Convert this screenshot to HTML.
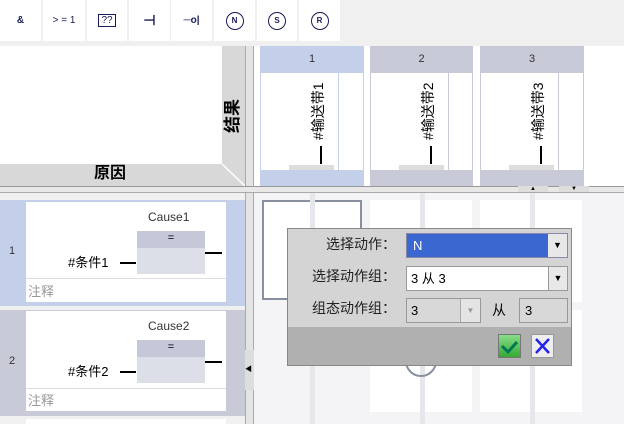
<!DOCTYPE html>
<html><head><meta charset="utf-8"><style>
*{margin:0;padding:0;box-sizing:border-box}
body{width:624px;height:424px;overflow:hidden;background:#f0f0f0;font-family:"Liberation Sans","Noto Sans CJK SC",sans-serif;position:relative}
.a{position:absolute}
.tb{position:absolute;top:0;height:41px;background:#fff;color:#1a1a5a;font-size:10px;font-weight:bold;display:flex;align-items:center;justify-content:center}
.circ{width:18px;height:18px;border:1.5px solid #1a1a5a;border-radius:50%;font-size:8px;display:flex;align-items:center;justify-content:center}
.rt{position:absolute;font-size:14px;color:#000;white-space:nowrap;width:70px;height:16px;line-height:16px;text-align:left;transform:rotate(-90deg);transform-origin:center}
.lbl{position:absolute;font-size:14px;color:#222;text-align:right}
</style></head><body>
<div class="tb" style="left:0;width:41px">&amp;</div>
<div class="tb" style="left:43px;width:42px;font-weight:normal">&gt; = 1</div>
<div class="tb" style="left:87px;width:40px"><span style="border:1.5px solid #1a1a5a;padding:0 2px;font-size:10px;font-weight:normal">??</span></div>
<div class="tb" style="left:129px;width:41px;font-size:14px">⊣</div>
<div class="tb" style="left:171px;width:41px">─o|</div>
<div class="tb" style="left:214px;width:41px"><div class="circ">N</div></div>
<div class="tb" style="left:257px;width:40px"><div class="circ">S</div></div>
<div class="tb" style="left:299px;width:41px"><div class="circ">R</div></div>
<div class="a" style="left:0;top:46px;width:222px;height:118px;background:#fff"></div>
<div class="a" style="left:0;top:164px;width:245px;height:22px;background:#d8d8d8;font-weight:bold;font-size:16px;text-align:center;line-height:20px;padding-right:25px">原因</div>
<div class="a" style="left:222px;top:46px;width:23px;height:140px;background:#d8d8d8"></div>
<svg class="a" style="left:222px;top:164px" width="23" height="22"><polygon points="0,0 23,22 0,22" fill="#d8d8d8"/><line x1="0" y1="0" x2="23" y2="22" stroke="#fff" stroke-width="1.5"/></svg>
<div class="a" style="left:208px;top:106px;width:50px;height:20px;line-height:20px;text-align:center;font-weight:bold;font-size:17px;transform:rotate(-90deg)">结果</div>
<div class="a" style="left:245px;top:46px;width:9px;height:378px;background:#e4e4e4;border-left:1px solid #aaa;border-right:1px solid #aaa"></div>
<div class="a" style="left:0;top:186px;width:624px;height:7px;background:#e8e8e8;border-top:1px solid #999;border-bottom:1px solid #aaa"></div>
<div class="a" style="left:254px;top:46px;width:370px;height:140px;background:#fff"></div>
<div class="a" style="left:260px;top:46px;width:104px;height:140px;background:#c4d0ea"></div>
<div class="a" style="left:370px;top:46px;width:103px;height:140px;background:#c8cad8"></div>
<div class="a" style="left:480px;top:46px;width:104px;height:140px;background:#c8cad8"></div>
<div class="a" style="left:260px;top:46px;width:104px;height:26px;font-size:11px;text-align:center;line-height:26px;color:#333">1</div>
<div class="a" style="left:370px;top:46px;width:103px;height:26px;font-size:11px;text-align:center;line-height:26px;color:#333">2</div>
<div class="a" style="left:480px;top:46px;width:104px;height:26px;font-size:11px;text-align:center;line-height:26px;color:#333">3</div>
<div class="a" style="left:261px;top:73px;width:77px;height:97px;background:#fff"></div><div class="a" style="left:339px;top:73px;width:24px;height:97px;background:#fff"></div>
<div class="a" style="left:371px;top:73px;width:77px;height:97px;background:#fff"></div><div class="a" style="left:449px;top:73px;width:23px;height:97px;background:#fff"></div>
<div class="a" style="left:481px;top:73px;width:77px;height:97px;background:#fff"></div><div class="a" style="left:559px;top:73px;width:24px;height:97px;background:#fff"></div>
<div class="rt" style="left:283px;top:97px">#输送带1</div>
<div class="rt" style="left:393px;top:97px">#输送带2</div>
<div class="rt" style="left:503px;top:97px">#输送带3</div>
<div class="a" style="left:320px;top:146px;width:2px;height:18px;background:#000"></div>
<div class="a" style="left:430px;top:146px;width:2px;height:18px;background:#000"></div>
<div class="a" style="left:540px;top:146px;width:2px;height:18px;background:#000"></div>
<div class="a" style="left:289px;top:165px;width:45px;height:5px;background:#ddd"></div>
<div class="a" style="left:399px;top:165px;width:45px;height:5px;background:#ddd"></div>
<div class="a" style="left:509px;top:165px;width:45px;height:5px;background:#ddd"></div>
<div class="a" style="left:518px;top:186px;width:30px;height:6px;background:#ddd;font-size:6px;text-align:center;line-height:6px">▲</div>
<div class="a" style="left:559px;top:186px;width:30px;height:6px;background:#ddd;font-size:6px;text-align:center;line-height:6px">▼</div>
<div class="a" style="left:254px;top:193px;width:370px;height:231px;background:#f4f4f6"></div>
<div class="a" style="left:262px;top:200px;width:100px;height:100px;background:#fff;border:2px solid #8890a0"></div>
<div class="a" style="left:370px;top:200px;width:102px;height:102px;background:#fff"></div>
<div class="a" style="left:480px;top:200px;width:102px;height:102px;background:#fff"></div>
<div class="a" style="left:370px;top:310px;width:102px;height:102px;background:#fff"></div>
<div class="a" style="left:480px;top:310px;width:102px;height:102px;background:#fff"></div>
<div class="a" style="left:310px;top:193px;width:5px;height:231px;background:#e6e6ec"></div>
<div class="a" style="left:420px;top:193px;width:5px;height:231px;background:#e6e6ec"></div>
<div class="a" style="left:530px;top:193px;width:5px;height:231px;background:#e6e6ec"></div>
<div class="a" style="left:405px;top:345px;width:32px;height:32px;border:2px solid #8890a0;border-radius:50%"></div>
<div class="a" style="left:0;top:200px;width:245px;height:106px;background:#c4d0ea"></div>
<div class="a" style="left:26px;top:202px;width:200px;height:100px;background:#fff"></div>
<div class="a" style="left:26px;top:278px;width:200px;height:1px;background:#ddd"></div>
<div class="a" style="left:9px;top:245px;font-size:11px;color:#333">1</div>
<div class="a" style="left:148px;top:210px;font-size:12px;color:#333">Cause1</div>
<div class="a" style="left:137px;top:231px;width:68px;height:43px;background:#dcdee8"></div>
<div class="a" style="left:137px;top:231px;width:68px;height:17px;background:#c4c8d8;text-align:center;font-size:11px;line-height:15px">=</div>
<div class="a" style="left:68px;top:252px;font-size:13px">#条件1</div>
<div class="a" style="left:120px;top:262px;width:16px;height:2px;background:#000"></div>
<div class="a" style="left:205px;top:252px;width:17px;height:2px;background:#000"></div>
<div class="a" style="left:28px;top:281px;font-size:13px;color:#999">注释</div>
<div class="a" style="left:0;top:310px;width:245px;height:106px;background:#c8cad8"></div>
<div class="a" style="left:26px;top:311px;width:200px;height:100px;background:#fff"></div>
<div class="a" style="left:26px;top:388px;width:200px;height:1px;background:#ddd"></div>
<div class="a" style="left:9px;top:355px;font-size:11px;color:#333">2</div>
<div class="a" style="left:148px;top:319px;font-size:12px;color:#333">Cause2</div>
<div class="a" style="left:137px;top:340px;width:68px;height:43px;background:#dcdee8"></div>
<div class="a" style="left:137px;top:340px;width:68px;height:17px;background:#c4c8d8;text-align:center;font-size:11px;line-height:15px">=</div>
<div class="a" style="left:68px;top:361px;font-size:13px">#条件2</div>
<div class="a" style="left:120px;top:371px;width:16px;height:2px;background:#000"></div>
<div class="a" style="left:205px;top:361px;width:17px;height:2px;background:#000"></div>
<div class="a" style="left:28px;top:390px;font-size:13px;color:#999">注释</div>
<div class="a" style="left:26px;top:419px;width:200px;height:5px;background:#fff"></div>
<div class="a" style="left:245px;top:350px;width:9px;height:40px;background:#ddd;font-size:7px;line-height:40px">◀</div>
<div class="a" style="left:287px;top:228px;width:285px;height:138px;background:#d4d4d4;border:1px solid #888"></div>
<div class="a" style="left:288px;top:327px;width:283px;height:38px;background:#b0b0b0"></div>
<div class="lbl" style="left:290px;top:234px;width:106px">选择动作：</div>
<div class="lbl" style="left:290px;top:266px;width:106px">选择动作组：</div>
<div class="lbl" style="left:290px;top:298px;width:106px">组态动作组：</div>
<div class="a" style="left:406px;top:233px;width:162px;height:25px;background:#3a68d0;border:1px solid #88a;color:#fff;font-size:13px;line-height:23px;padding-left:6px">N</div>
<div class="a" style="left:548px;top:234px;width:19px;height:23px;background:#e8e8e8;font-size:9px;text-align:center;line-height:23px">▼</div>
<div class="a" style="left:406px;top:266px;width:162px;height:25px;background:#fff;border:1px solid #999;font-size:13px;line-height:23px;padding-left:4px">3 从 3</div>
<div class="a" style="left:548px;top:267px;width:19px;height:23px;background:#e8e8e8;border-left:1px solid #999;font-size:9px;text-align:center;line-height:23px">▼</div>
<div class="a" style="left:406px;top:298px;width:75px;height:25px;background:#d8d8d8;border:1px solid #999;font-size:13px;line-height:23px;padding-left:4px">3</div>
<div class="a" style="left:460px;top:299px;width:20px;height:23px;background:#e4e4e4;border-left:1px solid #aaa;font-size:8px;color:#999;text-align:center;line-height:23px">▼</div>
<div class="a" style="left:492px;top:300px;font-size:14px">从</div>
<div class="a" style="left:519px;top:298px;width:49px;height:25px;background:#d8d8d8;border:1px solid #999;font-size:13px;line-height:23px;padding-left:5px">3</div>
<div class="a" style="left:498px;top:334px;width:23px;height:24px;background:linear-gradient(#8d8,#3a3);border:1px solid #777"></div>
<svg class="a" style="left:498px;top:334px" width="23" height="24"><path d="M4 12 L10 18 L19 8" stroke="#075" stroke-width="3" fill="none"/></svg>
<div class="a" style="left:531px;top:334px;width:23px;height:24px;background:#eee;border:1px solid #999"></div>
<svg class="a" style="left:531px;top:334px" width="23" height="24"><path d="M5 5 L18 19 M18 5 L5 19" stroke="#22e" stroke-width="2.5"/></svg>
</body></html>
